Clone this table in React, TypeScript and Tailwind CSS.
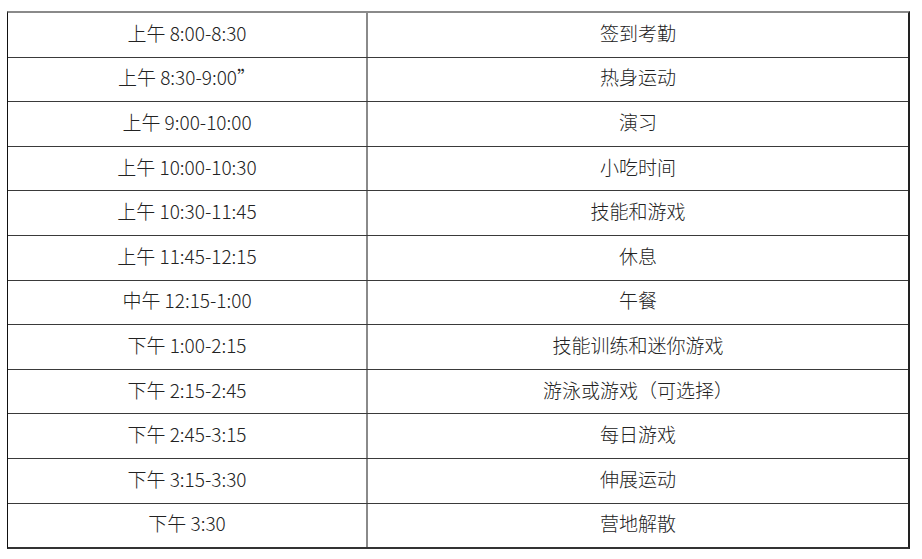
const rows: [string, string][] = [
  ["上午 8:00-8:30", "签到考勤"],
  ["上午 8:30-9:00”", "热身运动"],
  ["上午 9:00-10:00", "演习"],
  ["上午 10:00-10:30", "小吃时间"],
  ["上午 10:30-11:45", "技能和游戏"],
  ["上午 11:45-12:15", "休息"],
  ["中午 12:15-1:00", "午餐"],
  ["下午 1:00-2:15", "技能训练和迷你游戏"],
  ["下午 2:15-2:45", "游泳或游戏（可选择）"],
  ["下午 2:45-3:15", "每日游戏"],
  ["下午 3:15-3:30", "伸展运动"],
  ["下午 3:30", "营地解散"],
]

export default function App() {
  return (
    <div
      className="w-[922px] h-[559px] bg-white pt-[11px] pl-[7px]"
      style={{ fontFamily: '"Noto Sans CJK SC", "Noto Sans", sans-serif' }}
    >
      <div className="w-[903px] border-t-2 border-t-[#8a8a8a] border-l border-l-[#111] border-r-2 border-r-[#222] border-b-2 border-b-[#333]">
        {rows.map(([time, activity], i) => (
          <div
            key={i}
            className={
              i < rows.length - 1
                ? "grid grid-cols-[360px_1fr] h-[44.6px] border-b border-[#3a3a3a]"
                : "grid grid-cols-[360px_1fr] h-[43.6px]"
            }
          >
            <div className="flex items-center justify-center pb-[5px] border-r-2 border-[#8a8a8a] text-[19px] leading-none font-light text-[#222]">
              {time}
            </div>
            <div className="flex items-center justify-center pb-[5px] text-[19px] leading-none font-light text-[#222]">
              {activity}
            </div>
          </div>
        ))}
      </div>
    </div>
  )
}
